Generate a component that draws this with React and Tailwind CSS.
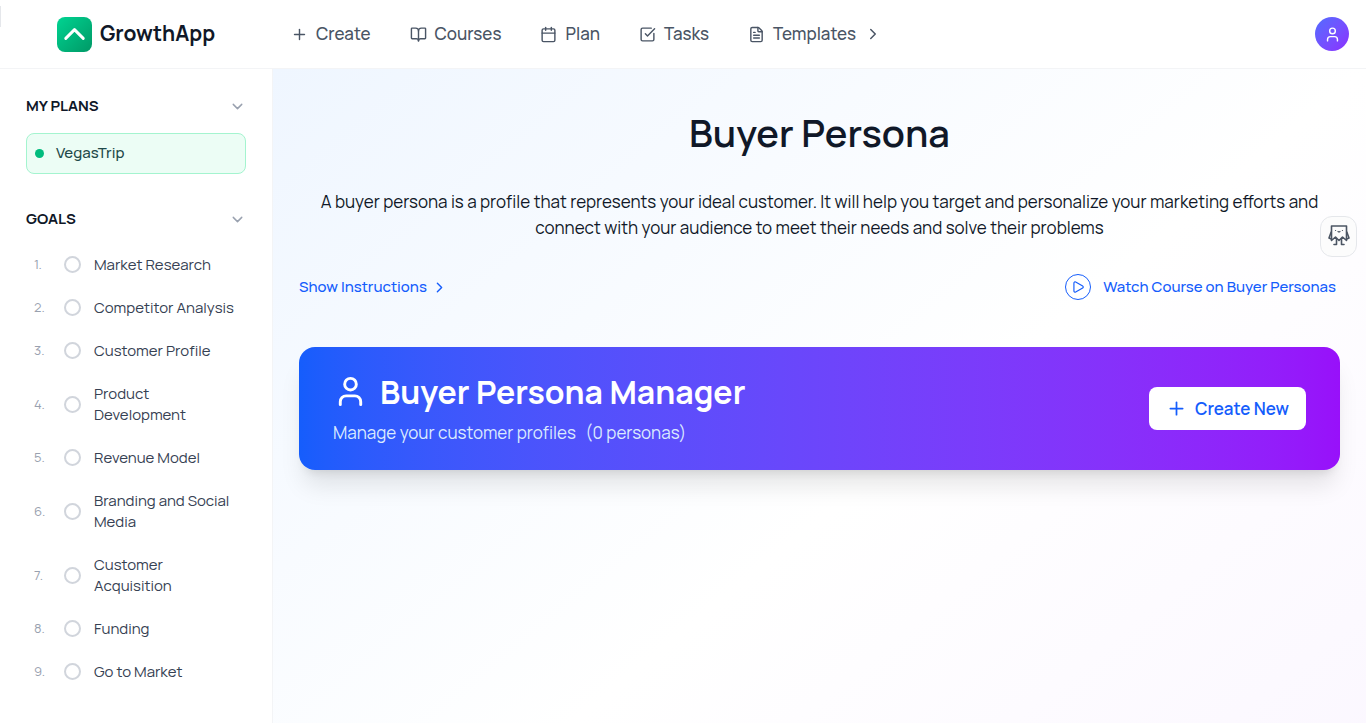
import { BookOpen, Calendar, ChevronDown, ChevronRight, ChevronUp, FileText, Play, Plus, SquareCheckBig, User } from "lucide-react";

const navItems = [
  { label: "Create", icon: Plus },
  { label: "Courses", icon: BookOpen },
  { label: "Plan", icon: Calendar },
  { label: "Tasks", icon: SquareCheckBig },
  { label: "Templates", icon: FileText, more: true },
];

const goals = [
  "Market Research",
  "Competitor Analysis",
  "Customer Profile",
  "Product Development",
  "Revenue Model",
  "Branding and Social Media",
  "Customer Acquisition",
  "Funding",
  "Go to Market",
];

function Header() {
  return (
    <header className="relative flex h-[69px] items-center border-b border-gray-100 bg-white pr-[17px] pl-[57px]">
      <span className="absolute top-[6px] left-0 h-[21px] w-px bg-gray-200" />
      <a href="#" className="flex w-[234px] items-center gap-2">
        <span className="flex size-[35px] items-center justify-center rounded-lg bg-linear-to-br from-[#00d492] to-[#009966] text-white">
          <ChevronUp size={36} strokeWidth={2} />
        </span>
        <span className="text-[21px] font-bold text-gray-900">GrowthApp</span>
      </a>
      <nav className="flex items-center gap-[39px]">
        {navItems.map(({ label, icon: Icon, more }) => (
          <a key={label} href="#" className="flex items-center gap-2 text-[17px] font-medium text-gray-600">
            <Icon size={17} />
            {label}
            {more && <ChevronRight size={18} />}
          </a>
        ))}
      </nav>
      <button aria-label="Account" className="ml-auto flex size-[34px] items-center justify-center rounded-full bg-linear-to-br from-[#4f6bff] to-[#8a2bff] text-white">
        <User size={17} />
      </button>
    </header>
  );
}

function SectionTitle({ children }) {
  return (
    <button className="flex w-full items-center justify-between text-[15px] leading-[22px] font-bold text-gray-900">
      {children}
      <ChevronDown size={17} className="text-gray-400" />
    </button>
  );
}

function Sidebar() {
  return (
    <aside className="w-[273px] shrink-0 border-r border-gray-100 bg-white px-[26px] pt-[26px]">
      <SectionTitle>MY PLANS</SectionTitle>
      <a href="#" className="mt-4 flex h-[41px] items-center gap-3 rounded-lg border border-[#a4f4cf] bg-[#ecfdf5] px-2 text-[15px] font-medium text-[#1f4a4a]">
        <span className="size-[9px] rounded-full bg-[#00bc7d]" />
        VegasTrip
      </a>

      <div className="mt-[34px]">
        <SectionTitle>GOALS</SectionTitle>
      </div>
      <ol className="mt-[13px]">
        {goals.map((goal, i) => (
          <li key={goal}>
            <a href="#" className="flex items-center px-2 py-[11px] text-[15px] leading-[21px] text-gray-700">
              <span className="w-[30px] shrink-0 text-[13px] text-gray-400">{i + 1}.</span>
              <span className="mr-[13px] size-[17px] shrink-0 rounded-full border-2 border-gray-300" />
              {goal}
            </a>
          </li>
        ))}
      </ol>
    </aside>
  );
}

function Mascot() {
  return (
    <svg width="22" height="24" viewBox="0 0 22 24" fill="none" stroke="#4b5563" strokeWidth="1.6" strokeLinejoin="round" strokeLinecap="round">
      <path d="M3.5 1h15v14.5L14.5 12 11 15.5 7.5 12l-4 3.5z" />
      <path d="M3.2 7 1 13l1.8.8M18.8 7 21 13l-1.8.8" />
      <path d="M8.5 14.5v5H6M13.5 14.5v5H16" />
      <path d="M7.5 5.5h.1M14.4 5.5h.1M10 6.5q1 .8 2 0" strokeWidth="1.2" />
    </svg>
  );
}

export default function App() {
  return (
    <div className="flex min-h-screen flex-col bg-white font-['Manrope','Inter',sans-serif]">
      <Header />
      <div className="flex flex-1">
        <Sidebar />
        <main className="min-w-0 flex-1 bg-linear-to-br from-[#eff6ff] via-white to-[#faf5ff] bg-[length:100%_900px] px-[26px] pt-[38px]">
          <h1 className="text-center text-[38px] leading-[50px] font-semibold text-gray-900">Buyer Persona</h1>
          <p className="mt-8 text-center text-[17px] leading-[26px] text-gray-900">
            A buyer persona is a profile that represents your ideal customer. It will help you target and personalize your marketing efforts and connect with your audience to meet their needs and solve their problems
          </p>

          <div className="mt-[33px] flex items-center justify-between text-[15px] font-medium text-[#155dfc]">
            <button className="flex items-center gap-1">
              Show Instructions
              <ChevronRight size={17} />
            </button>
            <a href="#" className="flex items-center gap-3 pr-1">
              <span className="flex size-[26px] items-center justify-center rounded-full border border-[#155dfc]">
                <Play size={14} strokeWidth={2} />
              </span>
              Watch Course on Buyer Personas
            </a>
          </div>

          <section className="mt-[47px] flex h-[123px] items-center justify-between rounded-2xl bg-linear-to-r from-[#155dfc] to-[#9810fa] px-[34px] text-white shadow-xl">
            <div>
              <h2 className="flex items-center gap-3 text-[32px] leading-[40px] font-bold">
                <User size={35} />
                Buyer Persona Manager
              </h2>
              <p className="mt-2 text-[17px] leading-[26px] text-blue-100">
                Manage your customer profiles <span className="ml-[6px]">(0 personas)</span>
              </p>
            </div>
            <button className="flex h-[43px] items-center gap-2 rounded-lg bg-white px-[17px] text-[17px] font-semibold text-[#155dfc]">
              <Plus size={21} />
              Create New
            </button>
          </section>
        </main>
      </div>
      <button aria-label="Open assistant" className="fixed top-[216px] right-[9px] flex h-[41px] w-[37px] items-start justify-center rounded-xl border border-gray-200 bg-[#fcfcfc] pt-2">
        <Mascot />
      </button>
    </div>
  );
}
